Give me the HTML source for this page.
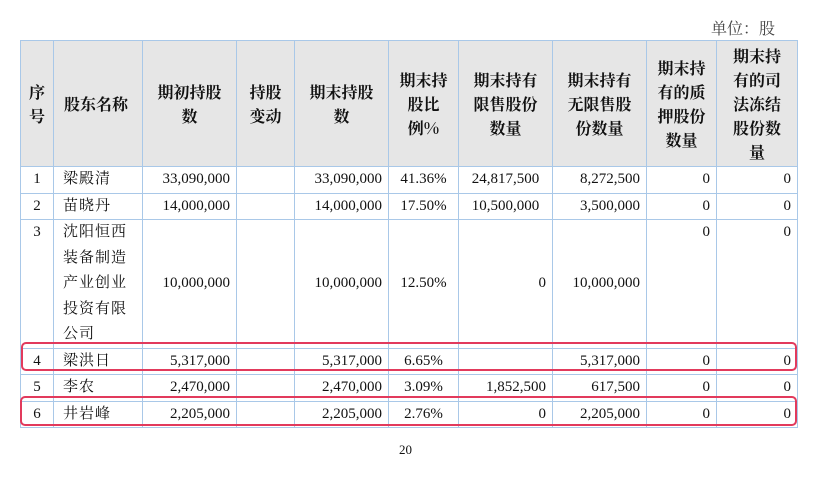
<!DOCTYPE html>
<html><head><meta charset="utf-8"><style>
body{margin:0;width:820px;height:496px;background:#fff;position:relative;overflow:hidden;font-family:"Liberation Serif","Noto Serif CJK SC",serif;color:#111}
table{position:absolute;left:20px;top:40px;border-collapse:collapse;table-layout:fixed;width:777px}
td{border:1px solid #a9c8e8;padding:0 4px;font-size:15px;line-height:25.5px;overflow:hidden;white-space:nowrap;text-align:left}
tr.h td{background:#e6e6e6;font-family:"Noto Serif CJK SC","Noto Sans CJK SC",serif;font-weight:bold;font-size:16px;line-height:24px;text-align:center;white-space:normal;height:125px}
tr.rw td{height:25px}
td.c{text-align:center}td.r{text-align:right;padding-right:6px}
td.n{padding-left:9px;letter-spacing:1px}
.unit{position:absolute;left:711px;top:16px;font-size:16px;color:#444}
.box{position:absolute;border:2.5px solid #e23a5c;border-radius:5px}
.pg{position:absolute;left:399px;top:442px;font-size:13px}
</style></head><body>
<div class="unit">单位：股</div>
<table>
<colgroup><col style="width:33px"><col style="width:89px"><col style="width:94px"><col style="width:58px"><col style="width:94px"><col style="width:70px"><col style="width:94px"><col style="width:94px"><col style="width:70px"><col style="width:81px"></colgroup>
<tr class="h"><td>序<br>号</td><td style="text-align:left;padding-left:10px">股东名称</td><td>期初持股<br>数</td><td>持股<br>变动</td><td>期末持股<br>数</td><td>期末持<br>股比<br>例%</td><td>期末持有<br>限售股份<br>数量</td><td>期末持有<br>无限售股<br>份数量</td><td>期末持<br>有的质<br>押股份<br>数量</td><td>期末持<br>有的司<br>法冻结<br>股份数<br>量</td></tr>
<tr class="rw"><td class="c">1</td><td class="n">梁殿清</td><td class="r">33,090,000</td><td></td><td class="r">33,090,000</td><td class="c">41.36%</td><td class="c">24,817,500</td><td class="r">8,272,500</td><td class="r">0</td><td class="r">0</td></tr>
<tr class="rw"><td class="c">2</td><td class="n">苗晓丹</td><td class="r">14,000,000</td><td></td><td class="r">14,000,000</td><td class="c">17.50%</td><td class="c">10,500,000</td><td class="r">3,500,000</td><td class="r">0</td><td class="r">0</td></tr>
<tr><td class="c" style="vertical-align:top">3</td><td class="n" style="white-space:normal;height:125px">沈阳恒西<br>装备制造<br>产业创业<br>投资有限<br>公司</td><td class="r">10,000,000</td><td></td><td class="r">10,000,000</td><td class="c">12.50%</td><td class="r">0</td><td class="r">10,000,000</td><td class="r" style="vertical-align:top">0</td><td class="r" style="vertical-align:top">0</td></tr>
<tr class="rw"><td class="c">4</td><td class="n">梁洪日</td><td class="r">5,317,000</td><td></td><td class="r">5,317,000</td><td class="c">6.65%</td><td></td><td class="r">5,317,000</td><td class="r">0</td><td class="r">0</td></tr>
<tr class="rw"><td class="c">5</td><td class="n">李农</td><td class="r">2,470,000</td><td></td><td class="r">2,470,000</td><td class="c">3.09%</td><td class="r">1,852,500</td><td class="r">617,500</td><td class="r">0</td><td class="r">0</td></tr>
<tr class="rw"><td class="c">6</td><td class="n">井岩峰</td><td class="r">2,205,000</td><td></td><td class="r">2,205,000</td><td class="c">2.76%</td><td class="r">0</td><td class="r">2,205,000</td><td class="r">0</td><td class="r">0</td></tr>
</table>
<div class="box" style="left:21px;top:342px;width:772px;height:25px"></div>
<div class="box" style="left:20px;top:396px;width:773px;height:26px"></div>
<div class="pg">20</div>
</body></html>
